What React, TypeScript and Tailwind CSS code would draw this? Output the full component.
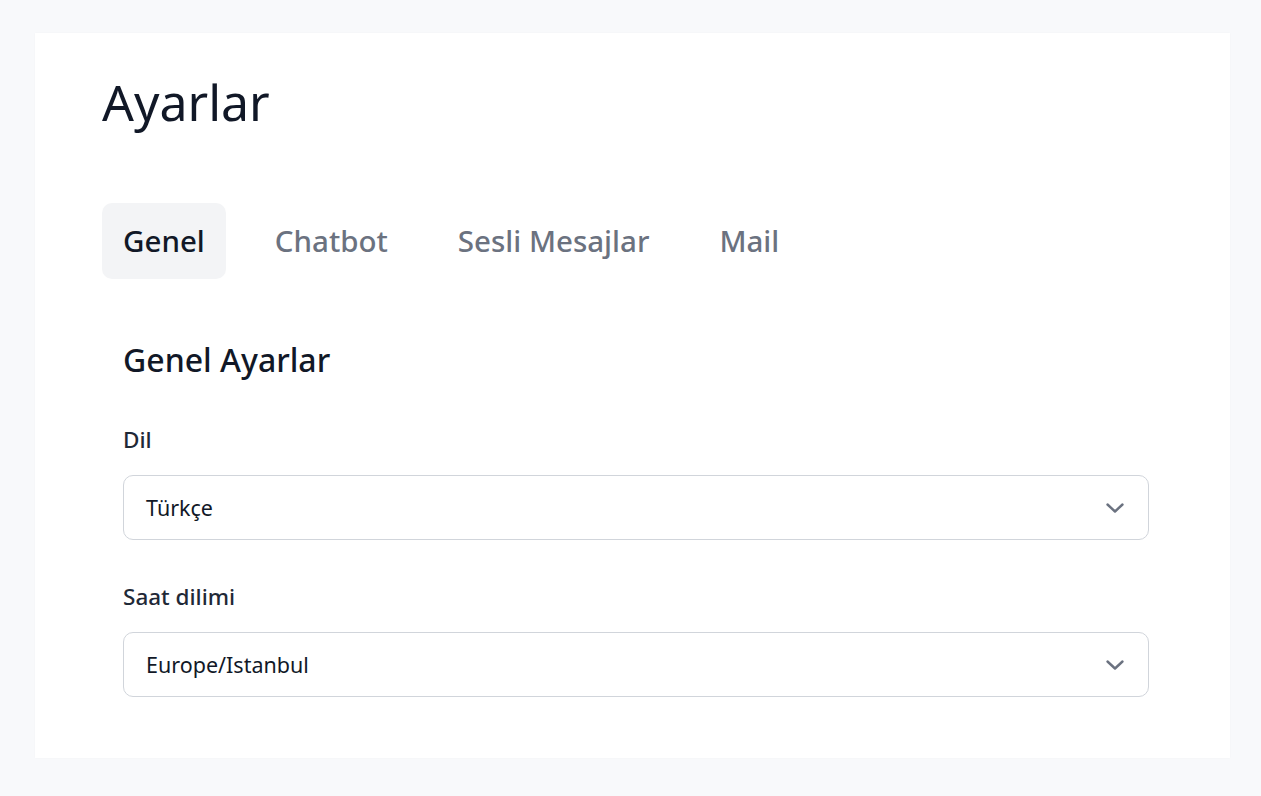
import { useState } from "react";

const tabs = ["Genel", "Chatbot", "Sesli Mesajlar", "Mail"];

function Chevron() {
  return (
    <svg width="20" height="12" viewBox="0 0 20 12" fill="none" className="shrink-0">
      <polyline
        points="2.5,2.5 10,9.5 17.5,2.5"
        stroke="#6b7280"
        strokeWidth="2.4"
        strokeLinecap="round"
        strokeLinejoin="round"
      />
    </svg>
  );
}

function SelectField({ label, value }: { label: string; value: string }) {
  return (
    <div className="flex flex-col">
      <label className="text-[22.5px] leading-[28px] font-medium text-[#1f2937]">
        {label}
      </label>
      <div className="mt-[21px] flex h-[65px] items-center justify-between rounded-[10px] border-[1.5px] border-[#d1d5db] bg-white pl-[22px] pr-[23px]">
        <span className="text-[21.5px] leading-[28px] text-[#111827]">{value}</span>
        <Chevron />
      </div>
    </div>
  );
}

export default function App() {
  const [active, setActive] = useState("Genel");

  return (
    <div
      className="min-h-screen bg-[#f8f9fb] pt-[33px] pl-[35px] pr-[31px] pb-[38px]"
      style={{ fontFamily: '"Noto Sans", "Open Sans", sans-serif' }}
    >
      <div className="bg-white pt-[38px] pb-[61px] pl-[67px] pr-[67px] shadow-[0_0_2px_rgba(0,0,0,0.03)]">
        <h1 className="text-[50px] leading-[62px] font-normal text-[#111827]">Ayarlar</h1>

        <div className="mt-[70px] flex gap-[28px]">
          {tabs.map((tab) => (
            <button
              key={tab}
              type="button"
              onClick={() => setActive(tab)}
              className={
                tab === active
                  ? "rounded-[10px] bg-[#f3f4f6] px-[21px] py-[20px] text-[29.5px] leading-[36px] font-medium text-[#111827]"
                  : "rounded-[10px] px-[21px] py-[20px] text-[29.5px] leading-[36px] font-medium text-[#6b7280]"
              }
            >
              {tab}
            </button>
          ))}
        </div>

        <div className="mt-[61px] pl-[21px] pr-[14px]">
          <h2 className="text-[32px] leading-[40px] font-medium text-[#111827]">Genel Ayarlar</h2>

          <div className="mt-[46px] flex flex-col gap-[43px]">
            <SelectField label="Dil" value="Türkçe" />
            <SelectField label="Saat dilimi" value="Europe/Istanbul" />
          </div>
        </div>
      </div>
    </div>
  );
}
